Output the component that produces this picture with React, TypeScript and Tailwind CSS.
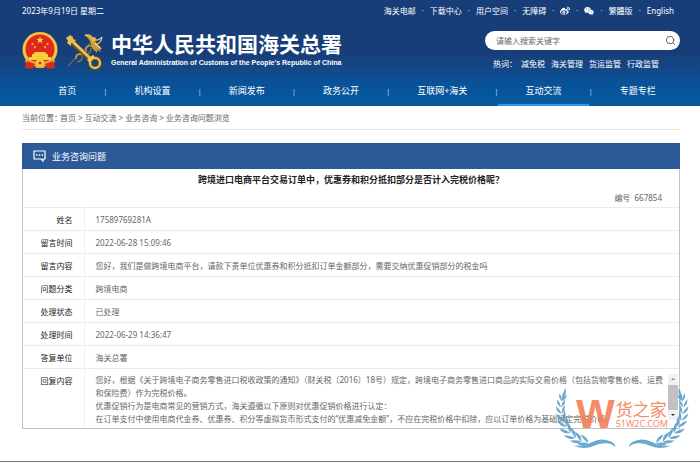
import { Fragment } from "react";
import { FaWeibo, FaWeixin } from "react-icons/fa";
import { Search } from "lucide-react";

const topLinks = ["海关电邮", "下载中心", "用户空间", "无障碍", "weibo", "wechat", "繁體版", "English"];
const hotWords = ["减免税", "海关管理", "货运监管", "行政监管"];
const navItems = ["首页", "机构设置", "新闻发布", "政务公开", "互联网+海关", "互动交流", "专题专栏"];
const crumbs = ["首页", "互动交流", "业务咨询", "业务咨询问题浏览"];

const rows = [
  ["姓名", "17589769281A"],
  ["留言时间", "2022-06-28 15:09:46"],
  ["留言内容", "您好，我们是做跨境电商平台，请款下贵单位优惠券和积分抵扣订单金额部分，需要交纳优惠促销部分的税金吗"],
  ["问题分类", "跨境电商"],
  ["处理状态", "已处理"],
  ["处理时间", "2022-06-29 14:36:47"],
  ["答复单位", "海关总署"],
];

function NationalEmblem() {
  return (
    <svg viewBox="0 0 36 38" className="h-[38px] w-[36px]" aria-hidden="true">
      <path d="M5 27 L3 36 L12 34 L18 37 L24 34 L33 36 L31 27 Z" fill="#d8261c" />
      <circle cx="18" cy="17.500" r="17.500" fill="#f3c440" />
      <circle cx="18" cy="17" r="14.500" fill="#dd2a1b" />
      <path d="M18 4.500l1 2.600h2.700l-2.200 1.600.9 2.700-2.400-1.700-2.400 1.700.9-2.700-2.200-1.600H17z" fill="#f6cf3d" />
      <circle cx="10.500" cy="12" r="1" fill="#f6cf3d" />
      <circle cx="13" cy="15" r="1" fill="#f6cf3d" />
      <circle cx="23" cy="15" r="1" fill="#f6cf3d" />
      <circle cx="25.500" cy="12" r="1" fill="#f6cf3d" />
      <path d="M13 20h10l1.500 2H26v3h3v3H7v-3h3v-3h1.500z" fill="#f6cf3d" />
      <path d="M4 26q5 4 10 3.500v-2h8v2q5 .5 10-3.500l1 4q-5 3-10 3l-1 3h-8l-1-3q-5 0-10-3z" fill="#e8b22f" />
      <path d="M5 29l8 3-2 5-8-1zM31 29l-8 3 2 5 8-1z" fill="#dd2a1b" />
      <circle cx="18" cy="31" r="3.500" fill="#f6d04a" />
      <circle cx="18" cy="31" r="1.500" fill="#dd2a1b" />
    </svg>
  );
}

function CustomsEmblem() {
  return (
    <svg viewBox="0 0 37 38" className="h-[38px] w-[37px]" fill="none" aria-hidden="true">
      <path d="M2 34L27 8" stroke="#a58a3c" strokeWidth="1" />
      <path d="M10 27q-1-5 4-5q6 2 6-4q0-5 6-4" stroke="#c9a347" strokeWidth="1.500" />
      <path d="M11 30q6-1 5-6M20 22q5 0 5-6" stroke="#8d7a3a" strokeWidth="1.200" />
      <path d="M18 3q8-3 10 5l8 9q-2-1-3-1l2 4-4-2v3l-5-5-1-4q-1-5-7-9z" fill="#c79a35" />
      <path d="M19 3q7 0 8 7M28 11q4 3 7 6M28 8q5 1 8-3q-1 6-5 7" stroke="#f0d27a" strokeWidth="1.200" />
      <circle cx="28" cy="7" r="2" fill="#e3bb4f" />
      <path d="M4 8L25 28" stroke="#7a5519" strokeWidth="5" />
      <path d="M4 7L25 27" stroke="#edc55a" strokeWidth="2.500" />
      <path d="M0 6l4-3 3 2 0 2 3 1-2 3-3 0 0 3-4-3 1-2z" fill="#e8bd4d" />
      <circle cx="29" cy="31" r="5" stroke="#7a5519" strokeWidth="4" />
      <circle cx="29" cy="31" r="5" stroke="#f0ca5e" strokeWidth="2" />
      <path d="M22 29l6-5" stroke="#f0ca5e" strokeWidth="3" />
    </svg>
  );
}

function CommentIcon() {
  return (
    <svg viewBox="0 0 13 12" className="h-[12px] w-[13px]" fill="none" aria-hidden="true">
      <path d="M1 1h11v8H10v2L8 9H1z" stroke="#fff" strokeWidth="1.200" />
      <path d="M3 5h1.400M5.800 5h1.400M8.600 5H10" stroke="#fff" strokeWidth="1.300" />
    </svg>
  );
}

/* x, y, growth angle and length of each pair of laurel leaves */
const leaves = [
  [112, 180, -160, 34],
  [92, 176, -152, 36],
  [74, 165, -144, 36],
  [58, 150, -134, 35],
  [46, 132, -122, 33],
  [37, 113, -112, 31],
  [32, 93, -102, 29],
  [30, 73, -92, 27],
  [32, 54, -80, 25],
];

function Branch() {
  return (
    <g fill="#5b9fc8">
      {leaves.map(([x, y, angle, size]) => (
        <Fragment key={x + y}>
          <path d="M0 0Q.5-.34 1 0Q.5.16 0 0" transform={`translate(${x} ${y}) rotate(${angle - 24}) scale(${size})`} />
          <path d="M0 0Q.5-.16 1 0Q.5.34 0 0" transform={`translate(${x} ${y}) rotate(${angle + 28}) scale(${size})`} />
        </Fragment>
      ))}
      <path d="M31 56Q32 34 44 15Q48 38 31 56" />
      <path d="M68 188Q100 190 122 178Q150 163 176 174Q194 181 193 193Q186 183 168 181Q148 179 126 190Q98 201 68 188" />
    </g>
  );
}

function Watermark() {
  return (
    <div className="pointer-events-none absolute -right-3 -bottom-[25px] h-[70px] w-[140px] opacity-90" aria-hidden="true">
      <svg viewBox="0 0 420 210" className="absolute inset-0 h-full w-full">
        <Branch />
        <g transform="translate(427 0) scale(-1 1)">
          <Branch />
        </g>
      </svg>
      <div className="absolute top-[11px] left-[25px] flex items-center text-[#f58055]">
        <span className="font-['Liberation_Sans',sans-serif] text-[41px] leading-[40px] font-bold">W</span>
        <span className="flex flex-col pl-px">
          <span className="text-[17px] leading-[19px]">货之家</span>
          <span className="text-[9px] leading-[10px]">51W2C.COM</span>
        </span>
      </div>
    </div>
  );
}

function TopLink({ name }: { name: string }) {
  if (name === "weibo")
    return (
      <a href="#weibo" aria-label="微博">
        <FaWeibo className="size-[10px]" />
      </a>
    );
  if (name === "wechat")
    return (
      <a href="#wechat" aria-label="微信">
        <FaWeixin className="size-[10px]" />
      </a>
    );
  return <a href="#top">{name}</a>;
}

export default function App() {
  return (
    <div className="overflow-hidden border-b border-[#64798a] bg-white font-['Noto_Sans','Noto_Sans_CJK_SC',sans-serif] text-[8px] leading-[13px] text-[#666]">
      <header className="bg-linear-to-b from-[#173e78] from-50% to-[#0a5298] to-80% text-white">
        <div className="flex justify-between pt-1 pr-[26px] pl-[22px]">
          <time dateTime="2023-09-19">2023年9月19日 星期二</time>
          <div className="flex items-center gap-[6px]">
            {topLinks.map((name, i) => (
              <Fragment key={name}>
                {i > 0 && <span className="opacity-70">·</span>}
                <TopLink name={name} />
              </Fragment>
            ))}
          </div>
        </div>

        <div className="flex justify-between pt-[14px] pr-5 pb-[7px] pl-[22px]">
          <div className="flex items-center gap-2">
            <NationalEmblem />
            <CustomsEmblem />
            <div className="flex flex-col">
              <h1 className="text-[21px] leading-[25px] font-bold">中华人民共和国海关总署</h1>
              <p className="font-['Liberation_Sans',sans-serif] text-[7px] leading-[12px] font-bold">
                General Administration of Customs of the People's Republic of China
              </p>
            </div>
          </div>
          <div className="w-[195px]">
            <form className="flex h-[19px] items-center rounded-full bg-white pr-1 pl-[11px]">
              <input
                type="text"
                aria-label="搜索"
                placeholder="请输入搜索关键字"
                className="min-w-0 flex-1 bg-transparent text-[#555] outline-none placeholder:text-[#666]"
              />
              <button type="button" aria-label="搜索" className="text-[#555]">
                <Search className="size-[11px]" strokeWidth={2} />
              </button>
            </form>
            <div className="flex gap-[6px] pt-[7px] pl-2">
              <span className="-mr-[2px]">热词：</span>
              {hotWords.map((word) => (
                <a key={word} href="#search">
                  {word}
                </a>
              ))}
            </div>
          </div>
        </div>

        <nav className="flex h-[29px] bg-linear-to-b from-[#0a5096] to-[#045a9f] pr-[17px] pl-[31px] text-[9px]">
          {navItems.map((item, i) => (
            <Fragment key={item}>
              {i > 0 && <span className="self-center text-[7px] opacity-80">|</span>}
              <a
                href="#nav"
                className={
                  item === "互动交流"
                    ? "flex flex-auto items-center justify-center border-b-2 border-[#2b9ae8]"
                    : "flex flex-auto items-center justify-center border-b-2 border-transparent"
                }
              >
                {item}
              </a>
            </Fragment>
          ))}
        </nav>
      </header>

      <main className="px-[22px] pr-5 pb-8">
        <div className="flex gap-[2px] border-b border-[#ebe7e2] pt-[5px] pb-[5px]">
          <span className="-mr-1">当前位置：</span>
          {crumbs.map((crumb, i) => (
            <Fragment key={crumb}>
              {i > 0 && <span>&gt;</span>}
              <a href="#crumb">{crumb}</a>
            </Fragment>
          ))}
        </div>

        <section className="relative mt-[13px] border border-t-0 border-[#bfc3c8]">
          <h2 className="-mx-px flex h-[26px] items-center gap-[6px] bg-[#2c5a99] pl-[11px] text-[9px] text-white">
            <CommentIcon />
            业务咨询问题
          </h2>
          <h3 className="pt-1 text-center text-[9px] leading-[14px] font-bold text-[#222]">
            跨境进口电商平台交易订单中，优惠券和积分抵扣部分是否计入完税价格呢？
          </h3>
          <p className="pt-1 pr-[17px] pb-[3px] text-right">编号&nbsp; 667854</p>
          <table className="w-full border-collapse">
            <tbody>
              {rows.map(([label, value]) => (
                <tr key={label} className="h-[23px] border-t border-[#ececec]">
                  <th scope="row" className="w-[61px] pr-[11px] text-right font-normal text-[#222]">
                    {label}
                  </th>
                  <td className="border-l border-[#f1f1f1] pl-[11px]">{value}</td>
                </tr>
              ))}
              <tr className="border-t border-[#ececec]">
                <th scope="row" className="w-[61px] pt-[5px] pr-[11px] text-right align-top font-normal text-[#222]">
                  回复内容
                </th>
                <td className="border-l border-[#f1f1f1] pl-[11px]">
                  <div className="flex pr-[1px]">
                    <div className="min-w-0 flex-1 pt-1 pb-[3px]">
                      <p>
                        您好，根据《关于跨境电子商务零售进口税收政策的通知》（财关税〔2016〕18号）规定，跨境电子商务零售进口商品的实际交易价格（包括货物零售价格、运费和保险费）作为完税价格。
                      </p>
                      <p>优惠促销行为是电商常见的营销方式，海关遵循以下原则对优惠促销价格进行认定：</p>
                      <p className="whitespace-nowrap">
                        在订单支付中使用电商代金券、优惠券、积分等虚拟货币形式支付的“优惠减免金额”，不应在完税价格中扣除，应以订单价格为基础确定完税价格。
                      </p>
                    </div>
                    <div className="mt-[5px] mb-2 flex w-[10px] flex-col items-center bg-[#f1f1f1] pt-1">
                      <span className="border-x-2 border-b-2 border-x-transparent border-b-[#888]" />
                      <span className="mt-[5px] mb-1 h-[25px] w-full bg-[#c1c1c1]" />
                      <span className="border-x-2 border-t-2 border-x-transparent border-t-[#333]" />
                    </div>
                  </div>
                </td>
              </tr>
            </tbody>
          </table>
          <Watermark />
        </section>
      </main>
    </div>
  );
}
